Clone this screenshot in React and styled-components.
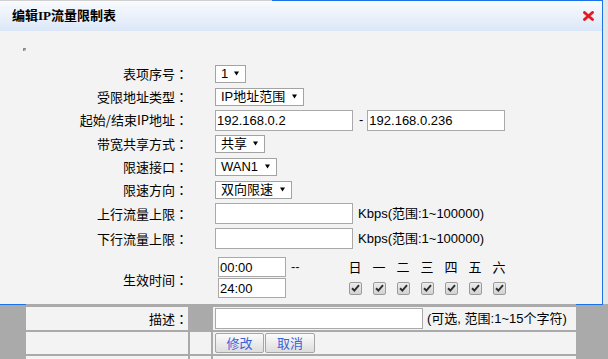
import React from "react";
import styled, { createGlobalStyle } from "styled-components";

const BLUE = "#1a73e8";
const PANEL = "#f3f3f3";
const GRAY = "#aaaaaa";

const GlobalStyle = createGlobalStyle`
  * { box-sizing: border-box; }
  html, body { margin: 0; padding: 0; background: ${GRAY}; }
  body {
    font-family: "Liberation Sans", "Noto Sans CJK SC", sans-serif;
    font-size: 13px;
    color: #111;
  }
`;

const Screen = styled.div`
  width: 608px;
  height: 359px;
  overflow: hidden;
  display: flex;
  flex-direction: column;
  background: ${GRAY};
`;

const Upper = styled.div`
  display: flex;
  height: 304px;
  flex: none;
`;

const Dialog = styled.div`
  width: 603px;
  display: flex;
  flex-direction: column;
  background: ${PANEL};
  border-right: 1px solid ${BLUE};
`;

const Strip = styled.div`
  flex: 1;
  background: #e6e6e6;
`;

const TitleBar = styled.div`
  height: 31px;
  flex: none;
  display: flex;
  align-items: center;
  justify-content: space-between;
  padding: 0 8px 0 12px;
  border-top: 1px solid;
  border-image: linear-gradient(to right, #d0d0d0 272px, ${BLUE} 272px) 1;
  background: linear-gradient(#f9fbfe, #dbe7f8);
`;

const Title = styled.span`
  font-family: "Liberation Serif", "Noto Sans CJK SC", serif;
  font-weight: 700;
  font-size: 13px;
  line-height: 16px;
  color: #000;
`;

const Body = styled.div`
  flex: 1;
  display: flex;
  flex-direction: column;
`;

const MarkRow = styled.div`
  height: 31px;
  flex: none;
  padding: 17px 0 0 23px;
`;

const Mark = styled.span`
  display: block;
  width: 3px;
  height: 3px;
  background: linear-gradient(135deg, #8a8a8a 50%, #c4c4c4 50%);
`;

const Form = styled.div`
  display: grid;
  grid-template-columns: 188px 1fr;
  grid-template-rows: 23px 23px 24px 23px 23px 23px 25px 25px 53px;
  column-gap: 27px;
`;

const Label = styled.div`
  display: flex;
  align-items: center;
  justify-content: flex-end;
  font-family: "Noto Sans CJK SC", sans-serif;
  font-size: 13px;
  line-height: 16px;
  color: #000;
  white-space: nowrap;
  padding-top: ${(p) => p.$pt || 0}px;
`;

const Colon = styled.span`
  font-family: "Noto Sans CJK JP", sans-serif;
`;

const Control = styled.div`
  display: flex;
  align-items: center;
  gap: ${(p) => p.$gap || 0}px;
  white-space: nowrap;
`;

const SelectBox = styled.div`
  width: ${(p) => p.$w}px;
  height: 18px;
  border: 1px solid #a3a3a3;
  background: #fff;
  display: flex;
  align-items: center;
  justify-content: space-between;
  padding: 0 6px 0 5px;
  font-size: 13px;
  line-height: 16px;
  color: #000;
`;

const TextBox = styled.input`
  width: ${(p) => p.$w}px;
  height: ${(p) => p.$h || 21}px;
  border: 1px solid #a9a9a9;
  background: #fff;
  padding: 0 1px;
  margin: 0;
  font-family: "Liberation Sans", "Noto Sans CJK SC", sans-serif;
  font-size: 13px;
  color: #000;
  outline: none;
`;

const Note = styled.span`
  font-size: 13px;
  line-height: 16px;
  color: #000;
  margin: ${(p) => p.$m || "0"};
`;

const TimeGrid = styled.div`
  align-self: start;
  margin: 6px 0 0 3px;
  display: grid;
  grid-template-columns: 68px 57px repeat(7, 24px);
  grid-template-rows: 20px 20px;
  row-gap: 1px;
  align-items: center;
`;

const Dash = styled.span`
  padding-left: 5px;
  font-size: 13px;
  line-height: 16px;
`;

const Day = styled.span`
  text-align: center;
  font-family: "Noto Sans CJK SC", sans-serif;
  font-size: 13px;
  line-height: 16px;
  color: #000;
`;

const CheckCell = styled.span`
  display: flex;
  justify-content: center;
`;

const CheckBox = styled.span`
  width: 13px;
  height: 13px;
  border: 1px solid #9b9b9b;
  border-radius: 2px;
  background: linear-gradient(#ececec, #d2d2d2);
  display: flex;
  align-items: center;
  justify-content: center;
`;

const Lower = styled.div`
  flex: 1;
  display: flex;
`;

const Side = styled.div`
  width: ${(p) => p.$w}px;
  flex: none;
  border-top: 1px solid ${(p) => (p.$edge ? BLUE : GRAY)};
`;

const Table = styled.div`
  width: 550px;
  flex: none;
  padding-top: 3px;
  display: grid;
  grid-template-columns: 162px 21px 363px;
  grid-template-rows: 23px 22px 22px;
  gap: 2px;
  background: ${GRAY};
`;

const Cell = styled.div`
  background: ${(p) => (p.$dark ? GRAY : PANEL)};
  display: flex;
  align-items: center;
  justify-content: ${(p) => (p.$right ? "flex-end" : "flex-start")};
  gap: ${(p) => p.$gap || 0}px;
  padding-left: ${(p) => p.$pl || 0}px;
  white-space: nowrap;
`;

const Buttons = styled.div`
  display: flex;
  gap: 1px;
`;

const Button = styled.button`
  width: ${(p) => p.$w}px;
  height: 20px;
  margin: 0;
  padding: 0;
  border: 1px solid #a5a5a5;
  border-radius: 2px;
  background: linear-gradient(#fbfbfb, #dddddd);
  color: #3a63d8;
  font-family: "Noto Sans CJK SC", sans-serif;
  font-size: 13px;
  line-height: 16px;
`;

const Arrow = () => (
  <svg width="5" height="5" viewBox="0 0 5 5">
    <polygon points="0,0.5 5,0.5 2.5,4.5" fill="#000" />
  </svg>
);

const Close = () => (
  <svg width="11" height="10" viewBox="0 0 11 10">
    <path d="M1.5 1.5 L9.5 8.5 M9.5 1.5 L1.5 8.5" stroke="#f08a8e" strokeWidth="3.4" strokeLinecap="square" />
    <path d="M1.5 1.5 L9.5 8.5 M9.5 1.5 L1.5 8.5" stroke="#e0141f" strokeWidth="2.2" strokeLinecap="square" />
  </svg>
);

const Check = () => (
  <svg width="9" height="8" viewBox="0 0 9 8">
    <path d="M1 4.2 L3.4 6.5 L8 1.2" stroke="#2e2e2e" strokeWidth="1.9" fill="none" />
  </svg>
);

const Select = ({ w, children }) => (
  <SelectBox $w={w}>
    <span>{children}</span>
    <Arrow />
  </SelectBox>
);

const FieldLabel = ({ pt, children }) => (
  <Label $pt={pt}>
    {children}
    <Colon>：</Colon>
  </Label>
);

const days = ["日", "一", "二", "三", "四", "五", "六"];

export default function App() {
  return (
    <>
      <GlobalStyle />
      <Screen>
        <Upper>
          <Dialog>
            <TitleBar>
              <Title>编辑IP流量限制表</Title>
              <Close />
            </TitleBar>
            <Body>
              <MarkRow>
                <Mark />
              </MarkRow>
              <Form>
                <FieldLabel>表项序号</FieldLabel>
                <Control>
                  <Select w={31}>1</Select>
                </Control>

                <FieldLabel>受限地址类型</FieldLabel>
                <Control>
                  <Select w={89}>IP地址范围</Select>
                </Control>

                <FieldLabel>起始/结束IP地址</FieldLabel>
                <Control>
                  <TextBox $w={138} defaultValue="192.168.0.2" readOnly />
                  <Note $m="0 4px 0 6px">-</Note>
                  <TextBox $w={138} defaultValue="192.168.0.236" readOnly />
                </Control>

                <FieldLabel>带宽共享方式</FieldLabel>
                <Control>
                  <Select w={50}>共享</Select>
                </Control>

                <FieldLabel>限速接口</FieldLabel>
                <Control>
                  <Select w={62}>WAN1</Select>
                </Control>

                <FieldLabel>限速方向</FieldLabel>
                <Control>
                  <Select w={77}>双向限速</Select>
                </Control>

                <FieldLabel>上行流量上限</FieldLabel>
                <Control $gap={5}>
                  <TextBox $w={138} defaultValue="" readOnly />
                  <Note>Kbps(范围:1~100000)</Note>
                </Control>

                <FieldLabel>下行流量上限</FieldLabel>
                <Control $gap={5}>
                  <TextBox $w={138} defaultValue="" readOnly />
                  <Note>Kbps(范围:1~100000)</Note>
                </Control>

                <FieldLabel pt={5}>生效时间</FieldLabel>
                <Control>
                  <TimeGrid>
                    <TextBox $w={68} $h={20} defaultValue="00:00" readOnly />
                    <Dash>--</Dash>
                    {days.map((d) => (
                      <Day key={d}>{d}</Day>
                    ))}
                    <TextBox $w={68} $h={20} defaultValue="24:00" readOnly />
                    <span />
                    {days.map((d) => (
                      <CheckCell key={d}>
                        <CheckBox>
                          <Check />
                        </CheckBox>
                      </CheckCell>
                    ))}
                  </TimeGrid>
                </Control>
              </Form>
            </Body>
          </Dialog>
          <Strip />
        </Upper>
        <Lower>
          <Side $w={26} $edge />
          <Table>
            <Cell $right>
              <FieldLabel>描述</FieldLabel>
            </Cell>
            <Cell $dark />
            <Cell $pl={2} $gap={4}>
              <TextBox $w={208} $h={21} defaultValue="" readOnly />
              <Note>(可选, 范围:1~15个字符)</Note>
            </Cell>
            <Cell />
            <Cell />
            <Cell $pl={2}>
              <Buttons>
                <Button $w={49}>修改</Button>
                <Button $w={50}>取消</Button>
              </Buttons>
            </Cell>
            <Cell />
            <Cell />
            <Cell />
          </Table>
          <Side $w={27} $edge />
          <Side $w={5} />
        </Lower>
      </Screen>
    </>
  );
}
